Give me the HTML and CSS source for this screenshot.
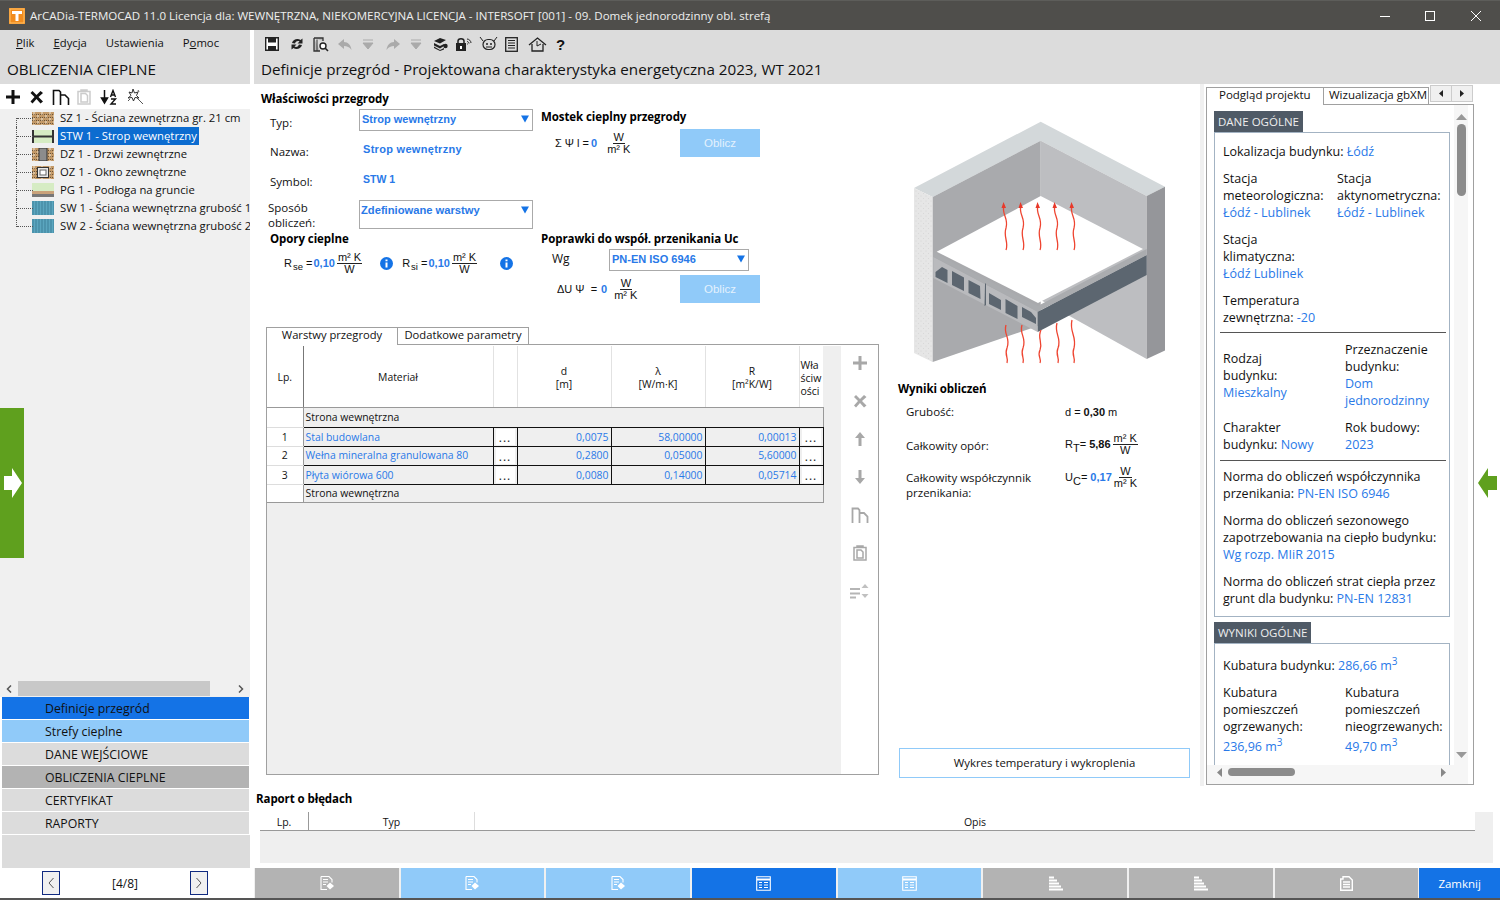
FILE: index.html
```html
<!DOCTYPE html>
<html lang="pl">
<head>
<meta charset="utf-8">
<title>ArCADia-TERMOCAD</title>
<link rel="stylesheet" href="styles.css">
</head>
<body>
<svg class="defs" width="0" height="0">
  <defs>
    <pattern id="brick" width="8" height="6" patternUnits="userSpaceOnUse">
      <rect width="8" height="6" fill="#c49a68"/>
      <path d="M0 2.500H8M0 5.500H8" stroke="#6a5338" stroke-width="1" stroke-dasharray="1 1"/>
      <path d="M2 0V2.500M6 3V5.500" stroke="#f0e6d4" stroke-width="1"/>
    </pattern>
    <pattern id="stripe" width="3" height="3" patternUnits="userSpaceOnUse">
      <rect width="3" height="3" fill="#5ba6bf"/>
      <path d="M1 0V3" stroke="#3d8199" stroke-width="1"/>
    </pattern>
    <pattern id="stipple" width="5" height="5" patternUnits="userSpaceOnUse">
      <rect width="5" height="5" fill="#e6e6e6"/>
      <circle cx="1" cy="1" r=".5" fill="#cfcfcf"/>
      <circle cx="3.500" cy="3.500" r=".5" fill="#d4d4d4"/>
    </pattern>
  </defs>
</svg>
<div class="app">
  <header class="titlebar">
    <svg class="logo" width="16" height="16" viewBox="0 0 16 16"><rect width="16" height="16" fill="#f28c1e"/><path d="M3 3H13V6H9.500V13H6.500V6H3Z" fill="#fff"/><rect x="1" y="1" width="14" height="14" fill="none" stroke="#ffc266"/></svg>
    <span class="title-text">ArCADia-TERMOCAD 11.0 Licencja dla: WEWNĘTRZNA, NIEKOMERCYJNA LICENCJA - INTERSOFT [001] - 09. Domek jednorodzinny obl. strefą</span>
    <div class="winbtns">
      <svg width="10" height="10" viewBox="0 0 10 10"><path d="M0 5.500H10" stroke="#fff"/></svg>
      <svg class="wmax" width="10" height="10" viewBox="0 0 10 10"><rect x=".5" y=".5" width="9" height="9" fill="none" stroke="#fff"/></svg>
      <svg width="10" height="10" viewBox="0 0 10 10"><path d="M0 0L10 10M10 0L0 10" stroke="#fff"/></svg>
    </div>
  </header>

  <div class="workspace">
    <aside class="left">
      <div class="left-head">
        <nav class="menu"><span><u>P</u>lik</span><span><u>E</u>dycja</span><span>Ustawienia</span><span>P<u>o</u>moc</span></nav>
        <div class="left-title">OBLICZENIA CIEPLNE</div>
      </div>
      <div class="left-tools">
        <svg width="16" height="16" viewBox="0 0 16 16"><path d="M6.500 1H9.500V6.500H15V9.500H9.500V15H6.500V9.500H1V6.500H6.500Z" fill="#111"/></svg>
        <svg width="17" height="16" viewBox="0 0 16 16"><path d="M2 4L4 2L8 6L12 2L14.500 4L10 8L14.500 12.500L12 14.500L8 10L4 14.500L2 12.500L6 8Z" fill="#111"/></svg>
        <svg width="18" height="16" viewBox="0 0 18 16"><path d="M1.500 16V1.500H7L8.500 3V16M8.500 6H13L16.500 9.500V16" fill="none" stroke="#111" stroke-width="1.600"/></svg>
        <svg width="14" height="16" viewBox="0 0 14 16"><path d="M1 2.500H13V15H1ZM4 4.500H8.500L10.500 6.500V13H4ZM4 2V1H10V2" fill="none" stroke="#ccc" stroke-width="1.500"/></svg>
        <svg class="t-az" width="18" height="16" viewBox="0 0 18 16"><path d="M4 1V10M1 9H7L4 14Z" fill="#111" stroke="#111" stroke-width="1.500"/><path d="M10 8L12.500 1.500L15 8M11 6H14M10.500 10H15L10.500 15H15.500" fill="none" stroke="#111" stroke-width="1.400"/></svg>
        <svg class="t-w" width="18" height="17" viewBox="0 0 18 17"><path d="M7 1L8.500 5L12 4L10.500 7.500L13 10L9 9.500L7.500 13L6 9.500L2 10L5 7.500L3 4L6 5Z" fill="none" stroke="#333"/><path d="M10 9L17 16M12 2L13 4M2 13L4 11" stroke="#555"/></svg>
      </div>
      <ul class="tree">
        <li class="first"><span class="conn"></span><svg class="ti" width="22" height="13" viewBox="0 0 22 13"><rect width="22" height="13" fill="url(#brick)"/></svg><span class="tl">SZ 1 - Ściana zewnętrzna gr. 21 cm</span></li>
        <li><span class="conn"></span><svg class="ti" width="22" height="13" viewBox="0 0 22 13"><rect x="1" width="20" height="13" fill="#d6ecc4"/><path d="M1 6.500H21" stroke="#333" stroke-width="2"/><path d="M1 0V13M21 0V13" stroke="#333" stroke-width="2"/></svg><span class="tl sel">STW 1 - Strop wewnętrzny</span></li>
        <li><span class="conn"></span><svg class="ti" width="22" height="13" viewBox="0 0 22 13"><rect width="22" height="13" fill="url(#brick)"/><rect x="7" y="0" width="8" height="13" fill="#8c8c8c" stroke="#333"/></svg><span class="tl">DZ 1 - Drzwi zewnętrzne</span></li>
        <li><span class="conn"></span><svg class="ti" width="22" height="13" viewBox="0 0 22 13"><rect width="22" height="13" fill="url(#brick)"/><rect x="5.500" y="1.500" width="11" height="10" fill="#e8e8e8" stroke="#333"/><rect x="8" y="4" width="6" height="5" fill="#fff" stroke="#666"/></svg><span class="tl">OZ 1 - Okno zewnętrzne</span></li>
        <li><span class="conn"></span><svg class="ti" width="22" height="14" viewBox="0 0 22 14"><rect width="22" height="8" fill="#d6ecc4"/><rect y="8" width="22" height="3" fill="#c9a27a"/><rect y="11" width="22" height="3" fill="#777"/></svg><span class="tl">PG 1 - Podłoga na gruncie</span></li>
        <li><span class="conn"></span><svg class="ti" width="22" height="14" viewBox="0 0 22 14"><rect width="22" height="14" fill="url(#stripe)"/></svg><span class="tl">SW 1 - Ściana wewnętrzna grubość 1</span></li>
        <li class="last"><span class="conn"></span><svg class="ti" width="22" height="14" viewBox="0 0 22 14"><rect width="22" height="14" fill="url(#stripe)"/></svg><span class="tl">SW 2 - Ściana wewnętrzna grubość 2</span></li>
      </ul>
      <div class="hscroll">
        <svg width="8" height="8" viewBox="0 0 8 8"><path d="M6 0.500L2.500 4L6 7.500" fill="none" stroke="#555" stroke-width="1.500"/></svg>
        <span class="hthumb"></span>
        <svg width="8" height="8" viewBox="0 0 8 8"><path d="M2 0.500L5.500 4L2 7.500" fill="none" stroke="#555" stroke-width="1.500"/></svg>
      </div>
      <nav class="leftnav">
        <a class="n-blue">Definicje przegród</a>
        <a class="n-light">Strefy cieplne</a>
        <a class="n-gray">DANE WEJŚCIOWE</a>
        <a class="n-dark">OBLICZENIA CIEPLNE</a>
        <a class="n-gray">CERTYFIKAT</a>
        <a class="n-gray">RAPORTY</a>
        <span class="n-fill"></span>
      </nav>
      <div class="pager">
        <button class="pg"><svg width="8" height="14" viewBox="0 0 8 14"><path d="M6.500 2L2 7L6.500 12" fill="none" stroke="#555"/></svg></button>
        <span>[4/8]</span>
        <button class="pg"><svg width="8" height="14" viewBox="0 0 8 14"><path d="M1.500 2L6 7L1.500 12" fill="none" stroke="#555"/></svg></button>
      </div>
    </aside>

    <main class="main">
      <div class="main-head">
        <div class="toolbar">
          <svg width="14" height="14" viewBox="0 0 14 14"><path d="M.7 .7H13.300V13.300H.7Z" fill="#fff" stroke="#222" stroke-width="1.400"/><rect x="3" y="1" width="8" height="4.500" fill="#222"/><rect x="3" y="9" width="8" height="4" fill="#222"/></svg>
          <svg width="14" height="14" viewBox="0 0 14 14"><path d="M2 6C3 2 8 1 10.500 3L12.500 1.500V6.500H7.500L9.500 4.500C8 3.500 6 4 5 6.500ZM12 8C11 12 6 13 3.500 11L1.500 12.500V7.500H6.500L4.500 9.500C6 10.500 8 10 9 7.500Z" fill="#222"/></svg>
          <svg width="16" height="15" viewBox="0 0 16 15"><path d="M1 1H10V4M1 1V14H7" fill="#bbb" stroke="#333" stroke-width="1.300"/><path d="M4 2.500V14" stroke="#333"/><circle cx="10" cy="9" r="3" fill="#fff" stroke="#222" stroke-width="1.400"/><path d="M12 11L15 14" stroke="#222" stroke-width="1.600"/></svg>
          <svg width="16" height="13" viewBox="0 0 16 13"><path d="M7 1L1 6L7 11V8C10 8 12.500 9 14.500 12C14 7 11 4 7 4Z" fill="#aaa"/></svg>
          <svg width="12" height="11" viewBox="0 0 12 11"><path d="M1 1H11M1 4H11L6 10Z" fill="#aaa" stroke="#aaa"/></svg>
          <svg width="16" height="13" viewBox="0 0 16 13"><path d="M9 1L15 6L9 11V8C6 8 3.500 9 1.500 12C2 7 5 4 9 4Z" fill="#aaa"/></svg>
          <svg width="12" height="11" viewBox="0 0 12 11"><path d="M1 1H11M1 4H11L6 10Z" fill="#aaa" stroke="#aaa"/></svg>
          <svg width="15" height="14" viewBox="0 0 15 14"><path d="M1 4L7 1L13 3L7 6.500ZM1 6L7 9L11 7V9L7 11.500L1 8.500ZM1 9.500L7 13L11 11V12.500L7 14L1 11Z" fill="#222"/><circle cx="12.500" cy="9" r="2.200" fill="#222"/></svg>
          <svg width="18" height="15" viewBox="0 0 18 15"><rect x="1" y="6" width="10" height="8" fill="#222"/><path d="M3 6V4C3 1 9 1 9 4V6" fill="none" stroke="#222" stroke-width="1.500"/><rect x="5" y="9" width="2" height="3" fill="#fff"/><path d="M12 2C14 2 16 4 16 6M12 4.500C13 4.500 14 5.500 14 6.500M12 7H12.800" fill="none" stroke="#222"/></svg>
          <svg width="19" height="16" viewBox="0 0 19 16"><rect x="4" y="3.500" width="12" height="10" rx="5" fill="none" stroke="#222" stroke-width="1.200"/><circle cx="8" cy="8" r="1" fill="#222"/><circle cx="12" cy="8" r="1" fill="#222"/><path d="M1 1L4 5M18 1L15 5M7 11H13" stroke="#222"/></svg>
          <svg width="13" height="15" viewBox="0 0 13 15"><rect x=".7" y=".7" width="11.600" height="13.600" fill="none" stroke="#222" stroke-width="1.300"/><path d="M3 3.500H10M3 6H10M3 8.500H10M3 11H10" stroke="#222" stroke-width="1.200"/></svg>
          <svg width="19" height="15" viewBox="0 0 19 15"><path d="M1 8L9.500 1L18 8M4 7V14H15V7" fill="none" stroke="#222" stroke-width="1.300"/><path d="M9 4V9L13 7" fill="none" stroke="#222"/></svg>
          <span class="q">?</span>
        </div>
        <h1 class="main-title">Definicje przegród - Projektowana charakterystyka energetyczna 2023, WT 2021</h1>
      </div>

      <div class="content">
        <section class="center">
          <div class="form-col">
            <div class="form-top">
              <div class="ftl">
                <h2 class="st st-a">Właściwości przegrody</h2>
                <div class="frow r1"><label class="lb l-typ">Typ:</label><div class="sel-box b1"><span>Strop wewnętrzny</span><svg width="8" height="8" viewBox="0 0 8 8"><path d="M0 .5H8L4 7.500Z" fill="#1473e6"/></svg></div></div>
                <div class="frow r2"><label class="lb l-n">Nazwa:</label><span class="bval">Strop wewnętrzny</span></div>
                <div class="frow r2"><label class="lb l-n">Symbol:</label><span class="bval bshort">STW 1</span></div>
                <div class="frow r3"><label class="lb l-s">Sposób obliczeń:</label><div class="sel-box b2"><span>Zdefiniowane warstwy</span><svg width="8" height="8" viewBox="0 0 8 8"><path d="M0 .5H8L4 7.500Z" fill="#1473e6"/></svg></div></div>
                <h2 class="st st-b">Opory cieplne</h2>
                <div class="rrow">
                  <span class="fx">R<sub>se</sub>&nbsp;=</span><b class="blue">0,10</b><span class="frac"><span>m² K</span><span>W</span></span>
                  <svg class="inf" width="13" height="13" viewBox="0 0 13 13"><circle cx="6.500" cy="6.500" r="6.500" fill="#1473e6"/><path d="M5.500 2.500H7.500V4.300H5.500ZM5.500 5.500H7.500V10.500H5.500Z" fill="#fff"/></svg>
                  <span class="fx fx2">R<sub>si</sub>&nbsp;=</span><b class="blue">0,10</b><span class="frac"><span>m² K</span><span>W</span></span>
                  <svg class="inf inf2" width="13" height="13" viewBox="0 0 13 13"><circle cx="6.500" cy="6.500" r="6.500" fill="#1473e6"/><path d="M5.500 2.500H7.500V4.300H5.500ZM5.500 5.500H7.500V10.500H5.500Z" fill="#fff"/></svg>
                </div>
              </div>
              <div class="ftr">
                <h2 class="st st-c">Mostek cieplny przegrody</h2>
                <div class="mrow m1">
                  <div class="eq eq1"><span class="fx">Σ Ψ l =</span><b class="blue">0</b><span class="frac"><span>W</span><span>m² K</span></span></div>
                  <button class="calc">Oblicz</button>
                </div>
                <h2 class="st st-d">Poprawki do współ. przenikania Uc</h2>
                <div class="wg"><span class="lb">Wg</span><div class="sel-box b3"><span>PN-EN ISO 6946</span><svg width="8" height="8" viewBox="0 0 8 8"><path d="M0 .5H8L4 7.500Z" fill="#1473e6"/></svg></div></div>
                <div class="mrow m2">
                  <div class="eq eq2"><span class="fx">ΔU Ψ&nbsp;&nbsp;=</span><b class="blue">0</b><span class="frac"><span>W</span><span>m² K</span></span></div>
                  <button class="calc">Oblicz</button>
                </div>
              </div>
            </div>

            <div class="layers">
              <div class="tabs">
                <span class="tab active">Warstwy przegrody</span>
                <span class="tab">Dodatkowe parametry</span>
              </div>
              <div class="frame">
                <div class="grid-area">
                  <table class="ltable">
                    <colgroup><col class="c1"><col class="c2"><col class="c3"><col class="c4"><col class="c4"><col class="c4"><col class="c5"></colgroup>
                    <thead>
                      <tr><th>Lp.</th><th>Materiał</th><th></th><th>d<br>[m]</th><th>λ<br>[W/m·K]</th><th>R<br>[m²K/W]</th><th class="wl">Wła<br>ściw<br>ości</th></tr>
                    </thead>
                    <tbody>
                      <tr class="side"><td class="n"></td><td colspan="6">Strona wewnętrzna</td></tr>
                      <tr class="d h18"><td class="n">1</td><td class="link">Stal budowlana</td><td class="dots"><span>...</span></td><td class="num">0,0075</td><td class="num">58,00000</td><td class="num">0,00013</td><td class="dots"><span>...</span></td></tr>
                      <tr class="d h19 up"><td class="n">2</td><td class="link">Wełna mineralna granulowana 80</td><td class="dots"><span>...</span></td><td class="num">0,2800</td><td class="num">0,05000</td><td class="num">5,60000</td><td class="dots"><span>...</span></td></tr>
                      <tr class="d h19"><td class="n">3</td><td class="link">Płyta wiórowa 600</td><td class="dots"><span>...</span></td><td class="num">0,0080</td><td class="num">0,14000</td><td class="num">0,05714</td><td class="dots"><span>...</span></td></tr>
                      <tr class="side end"><td class="n"></td><td colspan="6">Strona wewnętrzna</td></tr>
                    </tbody>
                  </table>
                </div>
                <div class="side-tools">
                  <svg width="16" height="16" viewBox="0 0 16 16"><path d="M6.500 1H9.500V6.500H15V9.500H9.500V15H6.500V9.500H1V6.500H6.500Z" fill="#a8a8a8"/></svg>
                  <svg width="16" height="16" viewBox="0 0 16 16"><path d="M2 4L4 2L8 6L12 2L14.500 4L10 8L14.500 12.500L12 14.500L8 10L4 14.500L2 12.500L6 8Z" fill="#a8a8a8"/></svg>
                  <svg width="12" height="16" viewBox="0 0 12 16"><path d="M6 1L11 7H7.500V15H4.500V7H1Z" fill="#a8a8a8"/></svg>
                  <svg width="12" height="16" viewBox="0 0 12 16"><path d="M6 15L11 9H7.500V1H4.500V9H1Z" fill="#a8a8a8"/></svg>
                  <svg width="18" height="16" viewBox="0 0 18 16"><path d="M1.500 16V1.500H7L8.500 3V16M8.500 6H13L16.500 9.500V16" fill="none" stroke="#a8a8a8" stroke-width="1.800"/></svg>
                  <svg width="14" height="16" viewBox="0 0 14 16"><path d="M1 2.500H13V15H1ZM4 5H8L10 7V13H4ZM4 2V1H10V2" fill="none" stroke="#a8a8a8" stroke-width="1.500"/></svg>
                  <svg width="20" height="16" viewBox="0 0 20 16"><path d="M0 6H10M0 10.500H10M0 14.500H6" stroke="#b5b5b5" stroke-width="2"/><path d="M15 1L18.500 5H11.500ZM15 15L18.500 11H11.500Z" fill="#c0c0c0"/></svg>
                </div>
              </div>
            </div>
          </div>

          <div class="result-col">
            <svg class="illus" width="300" height="270" viewBox="0 0 300 270">
              <path d="M24 78L150.700 11.700L275 76.700L256.700 86L150.700 30.700L42.700 87Z" fill="#d3d8da"/>
              <path d="M24 78L42.700 87V252L24 243Z" fill="url(#stipple)"/>
              <path d="M42.700 87L150.700 30.700V215L42.700 252Z" fill="#a9aaad"/>
              <path d="M150.700 30.700L256.700 86V249L150.700 190Z" fill="#bdbec1"/>
              <path d="M256.700 86L275 76.700V240.500L256.700 249Z" fill="#95969a"/>
              <path d="M43.300 147L147.700 201.700V222L43.300 168Z" fill="#b9babd"/>
              <path d="M147.700 201.700L256.700 145V165L147.700 222Z" fill="#5c6670"/>
              <path d="M43.300 146.500L147.700 201.700L256.700 145V139L147.700 196L43.300 142Z" fill="#aaacaf"/>
              <path d="M150.700 86L253 139L148 193L46.700 141.700Z" fill="#fff"/>
              <path d="M45.500 162L52 157L57.500 160V173L45.500 167ZM62 161L74 167.500V181L62 175ZM78.500 170L90 176L90.500 189L78.500 183ZM99 183L111 190V200L99 194ZM115.500 189L127.500 196V209L115.500 203ZM132 197L141 202L146 208V214L132 207Z" fill="#5c6670"/>
              <path d="M95 174L96 173V195L94.500 196Z" fill="#5c6670"/>
              <g class="waves">
                <path d="M114 95C111 104 119 108 116 118C113 127 119 132 116 140"/>
                <path d="M131 95C128 104 136 108 133 118C130 127 136 132 133 140"/>
                <path d="M148 95C145 104 153 108 150 118C147 127 153 132 150 140"/>
                <path d="M165 95C162 104 170 108 167 118C164 127 170 132 167 140"/>
                <path d="M182 95C179 104 187 108 184 118C181 127 187 132 184 140"/>
                <path d="M116 215C113 224 121 228 117 238C114 245 119 248 117 253"/>
                <path d="M132 215C129 224 137 228 133 238C130 245 135 248 133 253"/>
                <path d="M151 220C147 228 153 232 150 240C147 246 152 249 150 253"/>
                <path d="M167 213C164 224 172 228 168 238C165 245 170 248 168 253"/>
                <path d="M182 210C179 222 187 226 184 238C181 245 186 248 184 253"/>
              </g>
              <path d="M113.500 92L116 98H111.500ZM130.500 92L133 98H128.500ZM147.500 92L150 98H145.500ZM164.500 92L167 98H162.500ZM181.500 92L184 98H179.500Z" fill="#e8392a"/>
            </svg>
            <h2 class="st st-e">Wyniki obliczeń</h2>
            <div class="res-row rr1"><span class="rl">Grubość:</span><span class="rv rv1">d = <b>0,30</b> m</span></div>
            <div class="res-row rr2"><span class="rl">Całkowity opór:</span><span class="rv">R<sub>T</sub>= <b>5,86</b><span class="frac"><span>m² K</span><span>W</span></span></span></div>
            <div class="res-row rr3"><span class="rl">Całkowity współczynnik przenikania:</span><span class="rv">U<sub>C</sub>= <b class="blue">0,17</b><span class="frac"><span>W</span><span>m² K</span></span></span></div>
            <button class="chart">Wykres temperatury i wykroplenia</button>
          </div>
        </section>

        <aside class="preview">
          <div class="ptabs">
            <span class="ptab active">Podgląd projektu</span>
            <span class="ptab">Wizualizacja gbXM</span>
            <span class="tabarrows"><i><svg width="4" height="7" viewBox="0 0 4 7"><path d="M4 0V7L0 3.500Z" fill="#222"/></svg></i><i><svg width="4" height="7" viewBox="0 0 4 7"><path d="M0 0V7L4 3.500Z" fill="#222"/></svg></i></span>
          </div>
          <div class="pframe">
            <div class="pscroll">
              <div class="pcontent">
                <h3 class="phead">DANE OGÓLNE</h3>
                <div class="pbox">
                  <p class="pp">Lokalizacja budynku: <a>Łódź</a></p>
                  <div class="two t1"><p>Stacja meteorologiczna:<br><a>Łódź - Lublinek</a></p><p>Stacja aktynometryczna:<br><a>Łódź - Lublinek</a></p></div>
                  <p class="pp">Stacja<br>klimatyczna:<br><a>Łódź Lublinek</a></p>
                  <p class="pp">Temperatura<br>zewnętrzna: <a>-20</a></p>
                  <hr class="hr1">
                  <div class="two t2 mid"><p>Rodzaj<br>budynku:<br><a>Mieszkalny</a></p><p>Przeznaczenie budynku:<br><a>Dom jednorodzinny</a></p></div>
                  <div class="two t2 t3"><p>Charakter<br>budynku: <a>Nowy</a></p><p>Rok budowy:<br><a>2023</a></p></div>
                  <hr>
                  <p class="pp">Norma do obliczeń współczynnika przenikania: <a>PN-EN ISO 6946</a></p>
                  <p class="pp">Norma do obliczeń sezonowego zapotrzebowania na ciepło budynku: <a>Wg rozp. MIiR 2015</a></p>
                  <p class="pp">Norma do obliczeń strat ciepła przez grunt dla budynku: <a>PN-EN 12831</a></p>
                </div>
                <h3 class="phead ph2">WYNIKI OGÓLNE</h3>
                <div class="pbox pb2">
                  <p class="pp">Kubatura budynku: <a>286,66 m<sup>3</sup></a></p>
                  <div class="two t2"><p>Kubatura pomieszczeń ogrzewanych:<br><a class="vol">236,96 m<sup>3</sup></a></p><p>Kubatura pomieszczeń nieogrzewanych:<br><a class="vol">49,70 m<sup>3</sup></a></p></div>
                </div>
              </div>
              <div class="vbar">
                <svg width="11" height="6" viewBox="0 0 11 6"><path d="M0 6L5.500 0L11 6Z" fill="#999"/></svg>
                <span class="vthumb"></span>
                <svg width="11" height="6" viewBox="0 0 11 6"><path d="M0 0L5.500 6L11 0Z" fill="#999"/></svg>
              </div>
            </div>
            <div class="hbar">
              <svg width="5" height="9" viewBox="0 0 5 9"><path d="M5 0V9L0 4.500Z" fill="#888"/></svg>
              <span class="hbthumb"></span>
              <svg class="hbr" width="5" height="9" viewBox="0 0 5 9"><path d="M0 0V9L5 4.500Z" fill="#888"/></svg>
            </div>
          </div>
        </aside>
      </div>

      <section class="report">
        <h2 class="st st-f">Raport o błędach</h2>
        <div class="rep-table">
          <div class="rep-head"><span class="rh1">Lp.</span><span class="rh2">Typ</span><span class="rh3">Opis</span></div>
          <div class="rep-body"></div>
        </div>
      </section>

      <footer class="bottom">
        <button class="bb b-gray"><svg width="14" height="16" viewBox="0 0 14 15"><path class="doc" d="M1 1H9L12 4V7M1 1V14H7M3 4H8M3 6.500H8M3 9H6"/><path d="M10 7L14 10.500L10 14L6.500 10.500Z" fill="#fff"/></svg></button>
        <button class="bb b-light"><svg width="14" height="16" viewBox="0 0 14 15"><path class="doc" d="M1 1H9L12 4V7M1 1V14H7M3 4H8M3 6.500H8M3 9H6"/><path d="M10 7L14 10.500L10 14L6.500 10.500Z" fill="#fff"/></svg></button>
        <button class="bb b-light"><svg width="14" height="16" viewBox="0 0 14 15"><path class="doc" d="M1 1H9L12 4V7M1 1V14H7M3 4H8M3 6.500H8M3 9H6"/><path d="M10 7L14 10.500L10 14L6.500 10.500Z" fill="#fff"/></svg></button>
        <button class="bb b-blue"><svg width="15" height="15" viewBox="0 0 15 15"><path class="doc" d="M.7 .7H14.300V14.300H.7Z"/><path d="M1 3.500H14" stroke="#fff" stroke-width="2"/><path d="M3 6.500H6M8 6.500H12M3 9H6M8 9H12M3 11.500H6M8 11.500H12" stroke="#fff"/></svg></button>
        <button class="bb b-light"><svg width="15" height="15" viewBox="0 0 15 15"><path class="doc" d="M.7 .7H14.300V14.300H.7Z"/><path d="M1 3.500H14" stroke="#fff" stroke-width="2"/><path d="M3 6.500H6M8 6.500H12M3 9H6M8 9H12M3 11.500H6M8 11.500H12" stroke="#fff"/></svg></button>
        <button class="bb b-gray"><svg width="15" height="15" viewBox="0 0 15 15"><path d="M1 .5H6V2.500H1ZM1 3.500H9V5.500H1ZM1 6.500H11V8.500H1ZM1 9.500H13V11.500H1ZM1 12.500H15V14.500H1Z" fill="#fff"/></svg></button>
        <button class="bb b-gray"><svg width="15" height="15" viewBox="0 0 15 15"><path d="M1 .5H6V2.500H1ZM1 3.500H9V5.500H1ZM1 6.500H11V8.500H1ZM1 9.500H13V11.500H1ZM1 12.500H15V14.500H1Z" fill="#fff"/></svg></button>
        <button class="bb b-gray"><svg width="13" height="15" viewBox="0 0 13 15"><path class="doc doc-b" d="M3 3H.7V14.300H12.300V4L9 .7H3V3ZM3 6H10M3 8.500H10M3 11H10"/></svg></button>
        <button class="bb b-close">Zamknij</button>
      </footer>
    </main>
  </div>

  <div class="handle"><svg width="18" height="30" viewBox="0 0 18 30"><path d="M0 8H8V0L18 15L8 30V22H0Z" fill="#fff"/></svg></div>
  <div class="handle-r"><svg width="19" height="30" viewBox="0 0 19 30"><path d="M19 8H10V0L0 15L10 30V22H19Z" fill="#5fa01e"/></svg></div>
</div>
</body>
</html>
```

FILE: styles.css
```css
* { box-sizing: border-box; }
html, body { margin: 0; padding: 0; }
body { font-family: "Open Sans", "Noto Sans", sans-serif; font-size: 11.5px; color: #111; background: #fff; }
.defs { position: absolute; }
.app { position: relative; width: 1500px; height: 900px; overflow: hidden; display: flex; flex-direction: column; border-bottom: 2px solid #555; }
button { font-family: inherit; border: 0; padding: 0; margin: 0; }
h1, h2, h3, p, ul { margin: 0; padding: 0; }

.titlebar { height: 30px; flex: none; background: #4f4e4b; color: #eee; display: flex; align-items: center; padding-left: 9px; border-top: 1px solid #5d5d5a; }
.logo { margin-right: 5px; }
.title-text { font-size: 11.55px; white-space: nowrap; }
.winbtns { margin-left: auto; display: flex; gap: 35px; padding-right: 19px; }
.wmax { margin-right: 1px; }

.workspace { flex: 1; display: flex; min-height: 0; }
.left { width: 250px; flex: none; display: flex; flex-direction: column; background: #f0f0f0; }
.left > * { flex: none; }
.left-head { height: 54px; background: #dcdcdc; }
.menu { display: flex; height: 26px; align-items: center; padding: 0 0 2px 16px; gap: 19px; font-size: 11.3px; }
.left-title { font-size: 15.2px; line-height: 26px; padding-left: 7px; white-space: nowrap; }
.left-tools { height: 25px; background: #fff; display: flex; align-items: center; gap: 7px; padding-left: 5px; }
.t-az { margin-left: 2px; width: 19px; }
.tree { list-style: none; height: 571px; padding: 0 0 0 16px; overflow: hidden; font-size: 11.3px; }
.tree li { display: flex; align-items: center; height: 18px; white-space: nowrap; position: relative; }
.conn { width: 16px; height: 18px; flex: none; border-left: 1px dotted #555; position: relative; }
.conn::after { content: ""; position: absolute; left: 0; top: 9px; width: 16px; border-top: 1px dotted #555; }
.first .conn { height: 9px; align-self: flex-end; }
.first .conn::after { top: 0; }
.last .conn { height: 10px; align-self: flex-start; }
.ti { flex: none; }
.tl { margin-left: 4px; padding: 0 2px; line-height: 18px; }
.tl.sel { background: #0c6cd0; color: #fff; }
.hscroll { height: 17px; background: #f0f0f0; display: flex; align-items: center; padding: 0 5px; }
.hthumb { width: 192px; height: 15px; background: #c8c8c8; margin: 0 auto 0 5px; }
.leftnav { height: 171px; background: #fff; display: flex; flex-direction: column; padding-left: 2px; }
.leftnav a { height: 22px; margin-bottom: 1px; line-height: 24px; padding-left: 43px; margin-right: 1px; font-size: 12.3px; }
.n-blue { background: #1473e6; }
.n-light { background: #90caf9; }
.n-gray { background: #dcdcdc; }
.n-dark { background: #b3b3b3; }
.n-fill { flex: 1; background: #dcdcdc; }
.pager { height: 30px; background: #fff; display: flex; align-items: center; justify-content: space-between; padding: 0 42px; font-size: 12px; }
.pg { width: 18px; height: 24px; background: #f0f0f0; border: 1px solid #102a80; display: flex; align-items: center; justify-content: center; }

.main { flex: 1; min-width: 0; display: flex; flex-direction: column; margin-left: 4px; }
.main > * { flex: none; }
.main-head { height: 54px; background: #dcdcdc; margin-left: 0; }
.toolbar { height: 26px; display: flex; align-items: center; padding: 2px 0 0 11px; gap: 8px; }
.toolbar > :nth-child(2) { margin-left: 3px; }
.toolbar > :nth-child(3) { margin-left: 1px; }
.toolbar > :nth-child(5) { margin-left: 1px; }
.toolbar > :nth-child(6) { margin-left: 3px; }
.toolbar > :nth-child(7) { margin-left: 1px; }
.toolbar > :nth-child(8) { margin-left: 3px; }
.toolbar > :nth-child(9) { margin-left: -1px; }
.toolbar > :nth-child(10) { margin-left: -2px; }
.toolbar > :nth-child(11) { margin-left: -1px; }
.toolbar > :nth-child(12) { margin-left: 2px; }
.toolbar > :nth-child(13) { margin-left: 1px; }
.q { font: bold 15px "Liberation Sans", sans-serif; }
.main-title { font-size: 15.2px; font-weight: 400; line-height: 26px; padding-left: 7px; white-space: nowrap; }

.content { height: 702px; display: flex; background: #f0f0f0; }
.center { width: 946px; flex: none; background: #fff; display: flex; }
.form-col { width: 636px; flex: none; }
.form-top { height: 243px; display: flex; }
.ftl { width: 287px; flex: none; padding-left: 7px; }
.ftr { flex: 1; }
.st { font-size: 11.5px; font-weight: 700; line-height: 16px; white-space: nowrap; color: #000; letter-spacing: -.08px; }
.st-a { margin-top: 7px; margin-bottom: 2px; }
.st-b { margin: 2px 0 6px 9px; }
.st-c { margin-top: 25px; margin-bottom: 4px; }
.st-d { margin-top: 74px; margin-bottom: 2px; }
.frow { display: flex; line-height: 16px; }
.r1 { height: 31px; }
.r2 { height: 30px; }
.r3 { height: 29px; }
.lb { display: block; width: 98px; flex: none; }
.l-typ { padding: 6px 0 0 9px; }
.l-n { padding: 4px 0 0 9px; }
.l-s { padding: 0 20px 0 7px; line-height: 15px; }
.sel-box { width: 174px; border: 1px solid #aaa; display: flex; justify-content: space-between; color: #2979e8; font: bold 11px "Liberation Sans", sans-serif; padding: 3px 3px 0 2px; background: #fff; }
.sel-box svg { margin-top: 2px; }
.b1 { height: 22px; }
.b2 { height: 29px; padding: 3px 3px 0 1px; font-size: 11.2px; }
.b3 { height: 22px; width: 140px; padding: 3px 3px 0 2px; }
.bval { color: #2979e8; font: bold 11px/16px "Liberation Sans", sans-serif; padding: 1px 0 0 4px; letter-spacing: .3px; }
.bshort { font-size: 10.5px; letter-spacing: 0; }
.blue { color: #2979e8; }
.rrow { display: flex; align-items: center; height: 20px; padding-left: 23px; font: 11px "Liberation Sans", sans-serif; }
.rrow b, .eq b, .rv b { font-size: 11px; }
.fx { white-space: nowrap; margin-right: 1px; }
sub { font-size: 9.5px; line-height: 0; vertical-align: -3px; margin-left: 1px; }
.frac { display: inline-flex; flex-direction: column; align-items: center; margin-left: 3px; font: 11px/11px "Liberation Sans", sans-serif; vertical-align: middle; }
.rrow .frac { margin-left: 2px; }
.frac span:first-child { border-bottom: 1px solid #222; padding: 0 1px; }
.inf { margin-left: 18px; }
.fx2 { margin-left: 9px; }
.inf2 { margin-left: 23px; }
.mrow { display: flex; height: 28px; width: 219px; align-items: center; font: 11px "Liberation Sans", sans-serif; }
.eq { width: 139px; flex: none; display: flex; align-items: center; padding-left: 14px; }
.eq1 .fx { margin-right: 2px; }
.eq1 .frac { margin-left: 10px; }
.eq2 { padding-left: 16px; }
.eq2 .fx { margin-right: 4px; }
.eq2 .frac { margin-left: 7px; }
.calc { width: 80px; height: 28px; background: #90caf9; color: #e3f1fd; font-size: 11.5px; }
.wg { display: flex; height: 22px; margin-bottom: 4px; align-items: flex-start; }
.wg .lb { width: 68px; padding: 1px 0 0 11px; font-size: 12px; }

.layers { padding-left: 12px; }
.tabs { display: flex; height: 18px; position: relative; z-index: 1; }
.tab { height: 17px; border: 1px solid #a0a0a0; border-bottom: 0; line-height: 14px; text-align: center; width: 132px; margin-right: -1px; font-size: 11.2px; }
.tab.active { height: 18px; border-right: 1px solid #a0a0a0; background: #fff; }
.frame { width: 613px; height: 431px; margin-top: -1px; border: 1px solid #a0a0a0; display: flex; padding-top: 1px; }
.grid-area { width: 574px; flex: none; background: #efefef; }
.ltable { width: 556px; border-collapse: collapse; table-layout: fixed; font-size: 10.4px; }
.c1 { width: 36px; } .c2 { width: 190px; } .c3 { width: 24px; } .c4 { width: 94px; } .c5 { width: 24px; }
.ltable th { background: #fff; height: 61px; font-weight: 400; border-right: 1px solid #e2e2e2; border-bottom: 1px solid #999; line-height: 13px; padding: 3px 0 0; }
.ltable th:first-child { border-right: 1px solid #777; }
.ltable th.wl { border-right: 0; font-size: 10.5px; text-align: left; padding: 4px 0 0 1px; }
.ltable td { padding: 0 2px; white-space: nowrap; overflow: hidden; }
.side td { height: 20px; border-bottom: 1px solid #111; border-right: 1px solid #999; }
.side.end td { height: 18px; border-bottom: 1px solid #999; }
.ltable .n { background: #fff; text-align: center; border-right: 1px solid #999; border-bottom: 1px solid #ddd; }
.side .n { border-bottom-color: #ddd; }
.d td { border-right: 1px solid #111; border-bottom: 1px solid #111; }
.h18 td { height: 18px; }
.h19 td { height: 19px; }
.up td { padding-bottom: 2px; }
.link { color: #2979e8; }
.num { text-align: right; color: #2979e8; }
.d td.dots { padding: 1px 2px; text-align: center; color: #222; }
.d td.dots span { display: block; background: #fff; height: 16px; line-height: 17px; font-size: 12px; letter-spacing: 1px; }
.side-tools { flex: 1; display: flex; flex-direction: column; align-items: center; padding-top: 9px; gap: 22px; }

.result-col { flex: 1; display: flex; flex-direction: column; padding: 26px 10px 8px 8px; font-size: 11.5px; }
.illus { margin-left: -8px; flex: none; }
.waves path { fill: none; stroke: #ee4430; stroke-width: 1.300; }
.st-e { margin-top: 1px; }
.res-row { display: flex; padding-left: 8px; }
.rl { width: 159px; flex: none; line-height: 15px; }
.rv { font: 11px "Liberation Sans", sans-serif; white-space: nowrap; display: flex; align-items: center; height: 16px; }
.rv sub { font-size: 11px; margin: 8px 0 0 0; vertical-align: baseline; line-height: 11px; }
.rv b { margin-left: 3px; }
.rv .frac { margin-left: 2px; }
.rv1 { gap: 3px; }
.rv1 b { margin-left: 0; }
.rr1 { margin-top: 7px; }
.rr2 { margin-top: 18px; }
.rr3 { margin-top: 17px; }
.rr2 .rv { margin-top: -2px; }
.rr3 .rv { margin-top: -1px; }
.chart { margin-top: auto; height: 30px; width: 291px; margin-left: 1px; padding-bottom: 2px; background: #fff; border: 1px solid #90caf9; font-size: 11.4px; color: #111; }

.preview { margin-left: 4px; width: 296px; background: #fff; padding: 3px 0 0 2px; position: relative; }
.ptabs { display: flex; height: 18px; position: relative; z-index: 1; font-size: 11.5px; }
.ptab { height: 17px; border: 1px solid #a0a0a0; border-bottom: 0; line-height: 14px; white-space: nowrap; overflow: hidden; width: 118px; padding: 0 0 0 12px; }
.ptab.active { height: 18px; background: #fff; }
.ptab + .ptab { padding-left: 5px; margin-left: -1px; border-left: 1px solid #a0a0a0; width: 106px; }
.tabarrows { position: absolute; left: 225px; top: -2px; display: flex; }
.tabarrows i { width: 22px; height: 17px; background: #f0f0f0; border: 1px solid #ccc; display: flex; align-items: center; justify-content: center; margin-left: -1px; }
.pframe { width: 268px; height: 681px; margin-top: -1px; border: 1px solid #a0a0a0; display: flex; flex-direction: column; background: #fff; }
.pscroll { height: 660px; flex: none; display: flex; overflow: hidden; }
.pcontent { width: 246px; flex: none; padding: 6px 0 0 7px; font-size: 12.5px; line-height: 17px; }
.phead { display: inline-block; height: 21px; background: #4f5a66; color: #eee; font-size: 11.5px; font-weight: 400; line-height: 21px; padding: 0 4px; vertical-align: top; }
.ph2 { margin-top: 5px; }
.pbox { width: 236px; border: 1px solid #a3b3c3; padding: 10px 6px 9px 8px; }
.pb2 { padding-top: 13px; }
.pcontent a { color: #2979e8; }
.pcontent a.vol { display: inline-block; padding-top: 3px; }
sup { font-size: 10px; line-height: 0; }
.pp { margin-bottom: 10px; }
.pp:last-child { margin-bottom: 0; }
.two { display: grid; margin-bottom: 10px; }
.t1 { grid-template-columns: 114px 1fr; }
.t2 { grid-template-columns: 122px 1fr; }
.mid { align-items: center; }
.t3 { margin-bottom: 7px; }
.pbox hr { border: 0; border-top: 1px solid #555; margin: 6px -3px 7px -3px; }
.pbox hr.hr1 { margin-top: -4px; margin-bottom: 8px; }
.vbar { flex: 1; display: flex; flex-direction: column; align-items: center; padding: 9px 0 7px; background: #f6f6f6; margin-left: 1px; margin-right: 5px; }
.vthumb { width: 9px; height: 72px; background: #8c8c8c; border-radius: 5px; margin: 4px 0 auto; }
.hbar { flex: 1; display: flex; align-items: center; background: #f6f6f6; padding: 0 0 5px 10px; margin-right: 5px; }
.hbthumb { width: 67px; height: 8px; border-radius: 4px; background: #8c8c8c; margin-left: 6px; }
.hbr { margin-left: 146px; }

.report { height: 78px; margin-top: 4px; background: #fff; }
.st-f { padding: 1px 0 0 2px; height: 22px; }
.rep-table { margin: 0 7px 0 6px; background: #efefef; height: 51px; }
.rep-head { display: flex; height: 19px; width: 1215px; background: #fff; border-bottom: 1px solid #999; font-size: 10.5px; line-height: 20px; text-align: center; }
.rh1 { width: 49px; border-right: 1px solid #999; }
.rh2 { width: 166px; border-right: 1px solid #ddd; }
.rh3 { flex: 1; }

.main > .bottom { flex: 1; display: flex; gap: 2px; padding-left: 1px; background: #f0f0f0; }
.bb { width: 144px; display: flex; align-items: center; justify-content: center; background: #b3b3b3; }
.b-light { background: #90caf9; }
.b-blue { background: #1473e6; }
.b-close { width: 81px; margin-left: -1px; background: #1473e6; color: #fff; font-size: 11.5px; }
.doc { fill: none; stroke: #fff; stroke-width: 1.100; }
.doc-b { stroke-width: 1.400; }

.handle { position: absolute; left: 0; top: 408px; width: 24px; height: 150px; background: #5fa01e; display: flex; align-items: center; padding-left: 4px; }
.handle-r { position: absolute; left: 1478px; top: 468px; }
```
